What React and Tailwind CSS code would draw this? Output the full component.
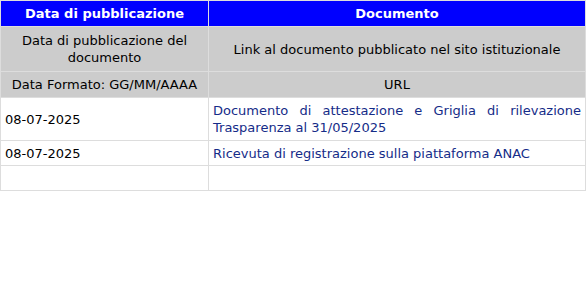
const documenti = [
  {
    data: "08-07-2025",
    titolo: "Documento di attestazione e Griglia di rilevazione Trasparenza al 31/05/2025",
  },
  {
    data: "08-07-2025",
    titolo: "Ricevuta di registrazione sulla piattaforma ANAC",
  },
];

function App() {
  return (
    <div className="w-[586px] bg-white text-[13px] leading-[17px] text-black" style={{ fontFamily: '"DejaVu Sans", Verdana, sans-serif' }}>
      <table className="w-full table-fixed border-collapse">
        <colgroup>
          <col className="w-[208px]" />
          <col />
        </colgroup>
        <thead>
          <tr className="h-[26px] bg-[#0000ff] font-bold text-white">
            <th className="border border-[#dddddd] px-1">Data di pubblicazione</th>
            <th className="border border-[#dddddd] px-1">Documento</th>
          </tr>
          <tr className="h-[45px] bg-[#cccccc] text-center">
            <td className="border border-[#dddddd] px-1">Data di pubblicazione del documento</td>
            <td className="border border-[#dddddd] px-1">Link al documento pubblicato nel sito istituzionale</td>
          </tr>
          <tr className="h-[26px] bg-[#cccccc] text-center">
            <td className="border border-[#dddddd] px-1">Data Formato: GG/MM/AAAA</td>
            <td className="border border-[#dddddd] px-1">URL</td>
          </tr>
        </thead>
        <tbody>
          {documenti.map((doc, i) => (
            <tr key={i} className={i === 0 ? "h-[43px]" : "h-[25px]"}>
              <td className="border border-[#dddddd] px-1">{doc.data}</td>
              <td className="border border-[#dddddd] px-1 text-justify">
                <a href="#" className="text-[#152c88]">{doc.titolo}</a>
              </td>
            </tr>
          ))}
          <tr className="h-[25px]">
            <td className="border border-[#dddddd] px-1"></td>
            <td className="border border-[#dddddd] px-1"></td>
          </tr>
        </tbody>
      </table>
    </div>
  );
}

export default App;
